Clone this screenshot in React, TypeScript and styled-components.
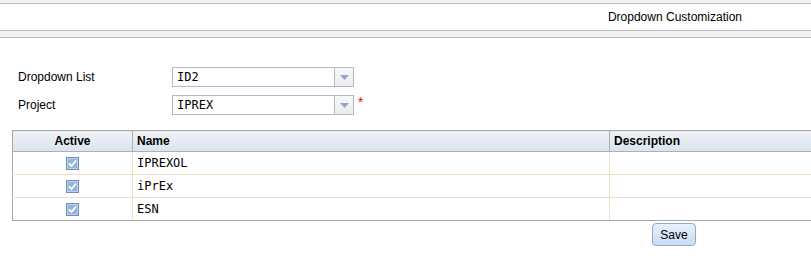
import React from "react";
import styled, { createGlobalStyle } from "styled-components";

const Global = createGlobalStyle`
  body {
    margin: 0;
    font-family: "Liberation Sans", Arial, sans-serif;
    font-size: 12px;
    color: #000;
    background: #fff;
    overflow: hidden;
  }
`;

const TopStrip = styled.div`
  height: 3px;
  background: #f0f1f3;
  border-bottom: 1px solid #b9bdc7;
`;

const TitleBar = styled.div`
  height: 26px;
  display: flex;
  align-items: center;
  justify-content: flex-end;
  padding-right: 69px;
  border-bottom: 1px solid #b9bdc7;
  font-size: 12px;
`;

const SubStrip = styled.div`
  height: 6px;
  background: #f0f1f3;
  border-bottom: 1px solid #b9bdc7;
`;

const Form = styled.div`
  padding: 29px 0 0 18px;
  display: flex;
  flex-direction: column;
  gap: 8px;
`;

const Row = styled.div`
  display: flex;
  align-items: center;
`;

const Label = styled.div`
  width: 154px;
  font-size: 12px;
`;

const Select = styled.div`
  width: 180px;
  height: 18px;
  border: 1px solid #b5b8c8;
  display: flex;
  background: #fff;
`;

const SelectText = styled.div`
  flex: 1;
  padding-left: 4px;
  font-family: "DejaVu Sans Mono", "Liberation Mono", monospace;
  font-size: 12px;
  line-height: 18px;
  color: #000;
`;

const Trigger = styled.div`
  width: 18px;
  border-left: 1px solid #b5b8c8;
  background: linear-gradient(#f8f8f8, #ececec);
  display: flex;
  align-items: center;
  justify-content: center;
`;

const Required = styled.span`
  color: #e0161a;
  font-size: 14px;
  margin-left: 4px;
  align-self: flex-start;
  margin-top: -1px;
`;

const Table = styled.table`
  margin: 15px 0 0 12px;
  width: 830px;
  border-collapse: collapse;
  border: 1px solid #a8a8a8;
  border-right: none;
  table-layout: fixed;
`;

const Th = styled.th<{ $center?: boolean; $w?: number }>`
  height: 20px;
  padding: 0 4px;
  text-align: ${(p) => (p.$center ? "center" : "left")};
  width: ${(p) => (p.$w ? `${p.$w}px` : "auto")};
  font-weight: bold;
  font-size: 12px;
  background: linear-gradient(#eef2f7, #dbe3ec);
  border-left: 1px solid #b0b0b0;
  border-bottom: 1px solid #b0b0b0;
  &:first-child {
    border-left: none;
  }
`;

const Td = styled.td<{ $center?: boolean }>`
  height: 22px;
  padding: 0 4px;
  text-align: ${(p) => (p.$center ? "center" : "left")};
  border-left: 1px solid #f3dcc8;
  border-bottom: 1px solid #f3dcc8;
  font-family: "DejaVu Sans Mono", "Liberation Mono", monospace;
  font-size: 12px;
  vertical-align: middle;
  &:first-child {
    border-left: none;
  }
  tr:last-child > & {
    border-bottom: 1px solid #a8a8a8;
  }
`;

const Footer = styled.div`
  display: flex;
  padding: 2px 0 0 652px;
`;

const Button = styled.button`
  width: 44px;
  height: 23px;
  border: 1px solid #93a9c6;
  border-radius: 4px;
  background: linear-gradient(#e8f1fb, #c8dcf2);
  font-family: "Liberation Sans", Arial, sans-serif;
  font-size: 12px;
  padding: 0;
  color: #000;
`;

const Arrow = () => (
  <svg width="9" height="5" viewBox="0 0 9 5">
    <path d="M0 0 H9 L4.5 5 Z" fill="#8fa6c6" />
  </svg>
);

const Check = () => (
  <svg width="13" height="13" viewBox="0 0 13 13" style={{ display: "block", margin: "0 auto" }}>
    <rect x="0.5" y="0.5" width="12" height="12" fill="#93b4dc" stroke="#6f8db5" />
    <rect x="1.5" y="1.5" width="10" height="10" fill="none" stroke="#bcd2ec" />
    <path d="M3 6.5 L5.5 9 L10 3.5" fill="none" stroke="#ffffff" strokeWidth="1.8" />
  </svg>
);

const rows = ["IPREXOL", "iPrEx", "ESN"];

export default function App() {
  return (
    <>
      <Global />
      <TopStrip />
      <TitleBar>Dropdown Customization</TitleBar>
      <SubStrip />
      <Form>
        <Row>
          <Label>Dropdown List</Label>
          <Select>
            <SelectText>ID2</SelectText>
            <Trigger>
              <Arrow />
            </Trigger>
          </Select>
        </Row>
        <Row>
          <Label>Project</Label>
          <Select>
            <SelectText>IPREX</SelectText>
            <Trigger>
              <Arrow />
            </Trigger>
          </Select>
          <Required>*</Required>
        </Row>
      </Form>
      <Table>
        <thead>
          <tr>
            <Th $center $w={111}>
              Active
            </Th>
            <Th $w={468}>Name</Th>
            <Th>Description</Th>
          </tr>
        </thead>
        <tbody>
          {rows.map((r) => (
            <tr key={r}>
              <Td $center>
                <Check />
              </Td>
              <Td>{r}</Td>
              <Td />
            </tr>
          ))}
        </tbody>
      </Table>
      <Footer>
        <Button>Save</Button>
      </Footer>
    </>
  );
}
